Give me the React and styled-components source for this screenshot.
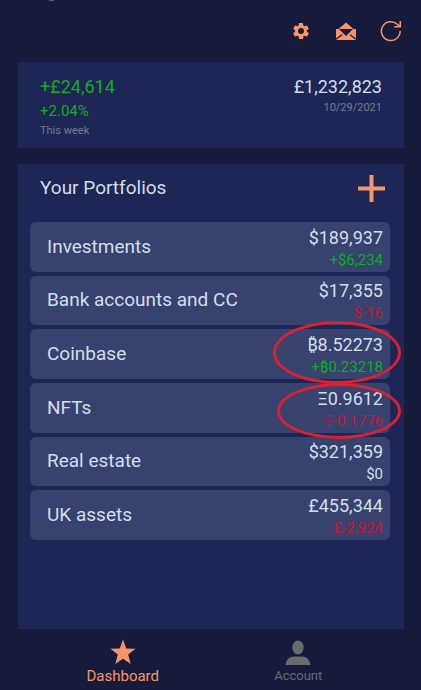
import styled, { createGlobalStyle } from 'styled-components'

const GlobalStyle = createGlobalStyle`
  * {
    box-sizing: border-box;
  }

  body {
    margin: 0;
    background-color: #161b3b;
    font-family: Roboto, 'Noto Sans', sans-serif;
    color: #d3deec;
  }

  button {
    border: 0;
    padding: 0;
    background: none;
    color: inherit;
    font-family: inherit;
    cursor: pointer;
  }

  svg {
    display: block;
    flex-shrink: 0;
  }
`

const toneColors = {
  up: '#0fae22',
  down: '#c8162c',
  flat: '#d3deec',
}

// Styled Components
const Page = styled.div`
  display: flex;
  flex-direction: column;
  min-height: 100vh;
`

const StatusDot = styled.span`
  position: absolute;
  top: 0;
  left: 49px;
  width: 5px;
  height: 1px;
  background-color: #555a75;
`

const Toolbar = styled.header`
  display: flex;
  justify-content: flex-end;
  align-items: flex-end;
  gap: 21px;
  height: 62px;
  padding: 0 18px 19px;
`

const IconButton = styled.button`
  display: flex;
  justify-content: center;
  align-items: center;
  width: 24px;
  height: 24px;
  color: #f6956a;
`

const AddButton = styled(IconButton)`
  width: 28px;
  height: 28px;
`

const Main = styled.main`
  flex: 1;
  display: flex;
  flex-direction: column;
  gap: 16px;
  padding: 0 17px 0 18px;
`

const Card = styled.section`
  background-color: #1e2656;
`

const Summary = styled(Card)`
  display: flex;
  justify-content: space-between;
  padding: 12px 22px 8px;
`

const SummaryColumn = styled.div`
  display: flex;
  flex-direction: column;
  align-items: ${(props) => (props.$end ? 'flex-end' : 'flex-start')};
`

const Amount = styled.span`
  font-size: 18px;
  line-height: 26px;
  color: ${(props) => toneColors[props.$tone || 'flat']};
`

const Percent = styled.span`
  font-size: 15px;
  line-height: 22px;
  color: ${toneColors.up};
`

const Caption = styled.span`
  font-size: 11px;
  line-height: ${(props) => (props.$tight ? '16px' : '18px')};
  color: #767c8e;
`

const Portfolios = styled(Card)`
  flex: 1;
  padding: 0 14px 22px 12px;
`

const PortfoliosHeader = styled.div`
  display: flex;
  justify-content: space-between;
  align-items: center;
  height: 58px;
  padding: 0 5px 10px 10px;
`

const Title = styled.h1`
  margin: 0;
  font-size: 19px;
  font-weight: 400;
  line-height: 26px;
`

const PortfolioList = styled.ul`
  display: grid;
  grid-auto-rows: 1fr;
  gap: 4px;
  min-height: 318px;
  margin: 0;
  padding: 0;
  list-style: none;
`

const PortfolioRow = styled.li`
  position: relative;
  display: flex;
  justify-content: space-between;
  align-items: center;
  padding: 0 7px 0 17px;
  border-radius: 6px;
  background-color: #38426f;
`

const PortfolioName = styled.span`
  font-size: 19px;
  line-height: 26px;
`

const Values = styled.div`
  display: flex;
  flex-direction: column;
  align-items: flex-end;
  padding-top: 2px;
`

const Value = styled.span`
  font-size: 18px;
  line-height: 24px;
`

const Change = styled.span`
  font-size: 15px;
  line-height: 20px;
  color: ${(props) => toneColors[props.$tone]};
`

const Ring = styled.span`
  position: absolute;
  z-index: 1;
  right: -11px;
  top: ${(props) => (props.$large ? '-8px' : '0')};
  width: ${(props) => (props.$large ? '128px' : '124px')};
  height: ${(props) => (props.$large ? '63px' : '56px')};
  border: 3px solid #dc2030;
  border-radius: 50%;
  pointer-events: none;
`

const TabBar = styled.nav`
  display: flex;
  height: 61px;
  padding: 10px 35px 0;
`

const Tab = styled.button`
  flex: 1;
  display: flex;
  flex-direction: column;
  align-items: center;
  color: ${(props) => (props.$active ? '#f6956a' : '#666c70')};
  font-size: ${(props) => (props.$active ? '15px' : '13px')};
  line-height: 22px;
`

const portfolios = [
  { name: 'Investments', value: '$189,937', change: '+$6,234', tone: 'up' },
  { name: 'Bank accounts and CC', value: '$17,355', change: '$-16', tone: 'down' },
  { name: 'Coinbase', value: '₿8.52273', change: '+₿0.23218', tone: 'up', ring: 'large' },
  { name: 'NFTs', value: 'Ξ0.9612', change: 'Ξ-0.1776', tone: 'down', ring: 'small' },
  { name: 'Real estate', value: '$321,359', change: '$0', tone: 'flat' },
  { name: 'UK assets', value: '£455,344', change: '£-2,924', tone: 'down' },
]

function GearIcon() {
  return (
    <svg width="20" height="20" viewBox="0 0 24 24" fill="currentColor">
      <path d="M19.14 12.94c.04-.3.06-.61.06-.94s-.02-.64-.07-.94l2.03-1.58a.49.49 0 0 0 .12-.61l-1.92-3.32a.49.49 0 0 0-.59-.22l-2.39.96a7 7 0 0 0-1.62-.94l-.36-2.54a.48.48 0 0 0-.48-.41h-3.84a.48.48 0 0 0-.47.41l-.36 2.54a7.4 7.4 0 0 0-1.62.94l-2.39-.96a.48.48 0 0 0-.59.22L2.74 8.87a.48.48 0 0 0 .12.61l2.03 1.58a6 6 0 0 0 0 1.88l-2.03 1.58a.49.49 0 0 0-.12.61l1.92 3.32c.12.22.37.29.59.22l2.39-.96c.5.38 1.03.7 1.62.94l.36 2.54c.05.24.24.41.48.41h3.84c.24 0 .44-.17.47-.41l.36-2.54a7 7 0 0 0 1.62-.94l2.39.96c.22.08.47 0 .59-.22l1.92-3.32a.48.48 0 0 0-.12-.61zM12 15.6a3.6 3.6 0 1 1 0-7.2 3.6 3.6 0 0 1 0 7.2z" />
    </svg>
  )
}

function MailIcon() {
  return (
    <svg width="20" height="18" viewBox="0 0 20 18" fill="currentColor">
      <path d="M10 0.5L17.5 7H2.5z" />
      <path d="M0 7.600l5.800 4.400L0 16.500z" />
      <path d="M20 7.600l-5.800 4.400 5.800 4.500z" />
      <path d="M0 7h3l7 7 7-7h3v1.200L10 15.500 0 8.200z" />
      <path d="M7 12.700L10 14.500l3-1.800 7 5.300H0z" />
    </svg>
  )
}

function RefreshIcon() {
  return (
    <svg width="22" height="22" viewBox="0 0 22 22" fill="none" stroke="currentColor" strokeWidth="1.5">
      <path d="M20.2 11A9.4 9.4 0 1 1 17.2 4.2L20 6.5" />
      <path d="M20.3 1v5.8h-6" />
    </svg>
  )
}

function PlusIcon() {
  return (
    <svg width="27" height="27" viewBox="0 0 27 27" fill="currentColor">
      <path d="M11.5 0h4v11.5H27v4H15.5V27h-4V15.5H0v-4h11.5z" />
    </svg>
  )
}

function StarIcon() {
  return (
    <svg width="26" height="26" viewBox="0 0 26 26" fill="currentColor">
      <path d="M13 0.5L16.2 9.4L25.5 9.7L18.2 15.5L20.7 25L13 19.7L5.3 25L7.8 15.5L0.5 9.7L9.8 9.4z" />
    </svg>
  )
}

function PersonIcon() {
  return (
    <svg width="26" height="26" viewBox="0 0 26 26" fill="currentColor">
      <ellipse cx="13" cy="8.5" rx="5.7" ry="7" />
      <path d="M0.500 26.500C1 20.500 4.500 17.500 9 17.500h8c4.500 0 8 3 8.500 9z" />
    </svg>
  )
}

function App() {
  return (
    <Page>
      <GlobalStyle />
      <StatusDot />
      <Toolbar>
        <IconButton aria-label="Settings">
          <GearIcon />
        </IconButton>
        <IconButton aria-label="Messages">
          <MailIcon />
        </IconButton>
        <IconButton aria-label="Refresh">
          <RefreshIcon />
        </IconButton>
      </Toolbar>
      <Main>
        <Summary>
          <SummaryColumn>
            <Amount $tone="up">+£24,614</Amount>
            <Percent>+2.04%</Percent>
            <Caption>This week</Caption>
          </SummaryColumn>
          <SummaryColumn $end>
            <Amount>£1,232,823</Amount>
            <Caption $tight>10/29/2021</Caption>
          </SummaryColumn>
        </Summary>
        <Portfolios>
          <PortfoliosHeader>
            <Title>Your Portfolios</Title>
            <AddButton aria-label="Add portfolio">
              <PlusIcon />
            </AddButton>
          </PortfoliosHeader>
          <PortfolioList>
            {portfolios.map((item) => (
              <PortfolioRow key={item.name}>
                <PortfolioName>{item.name}</PortfolioName>
                <Values>
                  <Value>{item.value}</Value>
                  <Change $tone={item.tone}>{item.change}</Change>
                </Values>
                {item.ring && <Ring $large={item.ring === 'large'} />}
              </PortfolioRow>
            ))}
          </PortfolioList>
        </Portfolios>
      </Main>
      <TabBar>
        <Tab $active>
          <StarIcon />
          Dashboard
        </Tab>
        <Tab>
          <PersonIcon />
          Account
        </Tab>
      </TabBar>
    </Page>
  )
}

export default App
